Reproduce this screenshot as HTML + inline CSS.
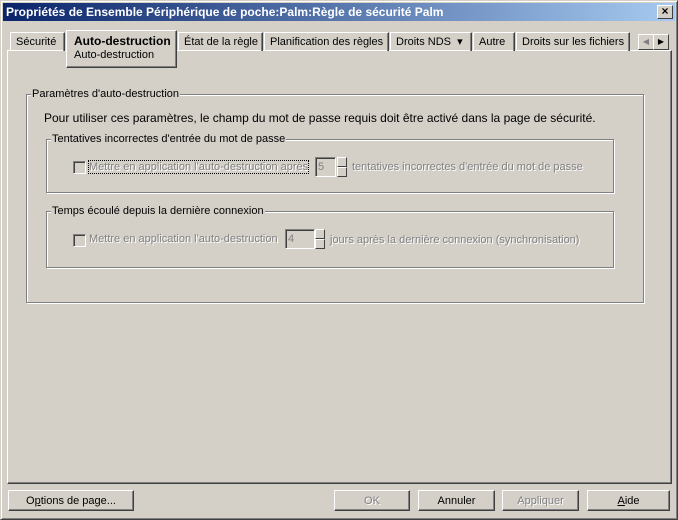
<!DOCTYPE html>
<html><head><style>
*{box-sizing:border-box}
body{margin:0;width:678px;height:520px;background:#d4d0c8;font:11px "Liberation Sans",sans-serif;color:#000;position:relative;overflow:hidden}
.a{position:absolute}
.win{left:0;top:0;width:678px;height:520px;border:1px solid;border-color:#d4d0c8 #404040 #404040 #d4d0c8;box-shadow:inset 1px 1px #fff,inset -1px -1px #808080}
.title{left:3px;top:3px;width:672px;height:18px;background:linear-gradient(90deg,#0a246a,#a6caf0);color:#fff;font-weight:bold;font-size:12px;line-height:18px;padding-left:3px}
.x{right:5px;top:5px;width:16px;height:14px;background:#d4d0c8;border:1px solid;border-color:#fff #404040 #404040 #fff;text-align:center;line-height:11px;font-weight:bold;color:#000;font-size:12px}
.tab{top:32px;height:19px;border:1px solid;border-color:#fff #404040 transparent #fff;border-bottom:none;padding:0 5px;line-height:19px;white-space:nowrap;box-shadow:inset -1px 0 #808080}
.panel{left:7px;top:50px;width:665px;height:434px;border:1px solid;border-color:#fff #404040 #404040 #fff;box-shadow:inset -1px -1px #808080}
.grp{border:1px solid #808080;box-shadow:1px 1px #fff,inset 1px 1px #fff}
.lg{background:#d4d0c8;padding:0 1px;line-height:12px}
.dis{color:#808080;text-shadow:1px 1px #fff}
.cb{width:13px;height:13px;border:1px solid;border-color:#808080 #fff #fff #808080;box-shadow:inset 1px 1px #404040,inset -1px -1px #d4d0c8;background:#d4d0c8}
.ed{height:20px;border:1px solid;border-color:#808080 #fff #fff #808080;box-shadow:inset 1px 1px #404040;background:#d4d0c8;color:#808080;padding:3px 2px;line-height:12px}
.sp{width:10px;height:10px;border:1px solid;border-color:#fff #404040 #404040 #fff;background:#d4d0c8}
.btn{top:490px;height:21px;border:1px solid;border-color:#fff #404040 #404040 #fff;box-shadow:inset -1px -1px #808080;text-align:center;line-height:20px}
</style></head><body>
<div class="a win"></div>
<div class="a title">Propriétés de Ensemble Périphérique de poche:Palm:Règle de sécurité Palm</div>
<div class="a x">×</div>

<div class="a panel"></div>
<div class="a tab" style="left:10px;width:55px">Sécurité</div>
<div class="a tab" style="left:178px;width:85px">État de la règle</div>
<div class="a tab" style="left:264px;width:125px">Planification des règles</div>
<div class="a tab" style="left:390px;width:82px">Droits NDS &nbsp;▾</div>
<div class="a tab" style="left:473px;width:42px">Autre</div>
<div class="a tab" style="left:516px;width:114px;overflow:hidden">Droits sur les fichiers</div>
<div class="a" style="left:66px;top:30px;width:111px;height:38px;background:#d4d0c8;border:1px solid;border-color:#fff #404040 #404040 #fff;box-shadow:inset -1px -1px #808080;padding:4px 0 0 7px;line-height:13px"><b style="font-size:12px">Auto-destruction</b><br>Auto-destruction</div>
<div class="a" style="left:638px;top:34px;width:16px;height:16px;border:1px solid;border-color:#fff #404040 #404040 #fff;font-size:8px;text-align:center;line-height:14px;color:#808080">◀</div>
<div class="a" style="left:653px;top:34px;width:16px;height:16px;border:1px solid;border-color:#fff #404040 #404040 #fff;font-size:8px;text-align:center;line-height:14px">▶</div>

<div class="a grp" style="left:26px;top:94px;width:618px;height:209px"></div>
<div class="a lg" style="left:31px;top:88px">Paramètres d'auto-destruction</div>
<div class="a" style="left:44px;top:111px;font-size:12px">Pour utiliser ces paramètres, le champ du mot de passe requis doit être activé dans la page de sécurité.</div>

<div class="a grp" style="left:46px;top:139px;width:568px;height:54px"></div>
<div class="a lg" style="left:51px;top:133px">Tentatives incorrectes d'entrée du mot de passe</div>
<div class="a cb" style="left:73px;top:161px"></div>
<div class="a dis" style="left:89px;top:161px;outline:1px dotted #000">Mettre en application l'auto-destruction après</div>
<div class="a ed" style="left:315px;top:157px;width:21px">5</div>
<div class="a sp" style="left:337px;top:157px"></div><div class="a sp" style="left:337px;top:167px"></div>
<div class="a dis" style="left:352px;top:161px">tentatives incorrectes d'entrée du mot de passe</div>

<div class="a grp" style="left:46px;top:211px;width:568px;height:57px"></div>
<div class="a lg" style="left:51px;top:205px">Temps écoulé depuis la dernière connexion</div>
<div class="a cb" style="left:73px;top:234px"></div>
<div class="a dis" style="left:89px;top:233px">Mettre en application l'auto-destruction</div>
<div class="a ed" style="left:285px;top:229px;width:30px">4</div>
<div class="a sp" style="left:315px;top:229px"></div><div class="a sp" style="left:315px;top:239px"></div>
<div class="a dis" style="left:330px;top:234px">jours après la dernière connexion (synchronisation)</div>

<div class="a btn" style="left:8px;width:126px">O<u>p</u>tions de page...</div>
<div class="a btn dis" style="left:334px;width:76px">OK</div>
<div class="a btn" style="left:418px;width:77px">Annuler</div>
<div class="a btn dis" style="left:502px;width:77px">Appliquer</div>
<div class="a btn" style="left:587px;width:83px"><u>A</u>ide</div>
</body></html>
